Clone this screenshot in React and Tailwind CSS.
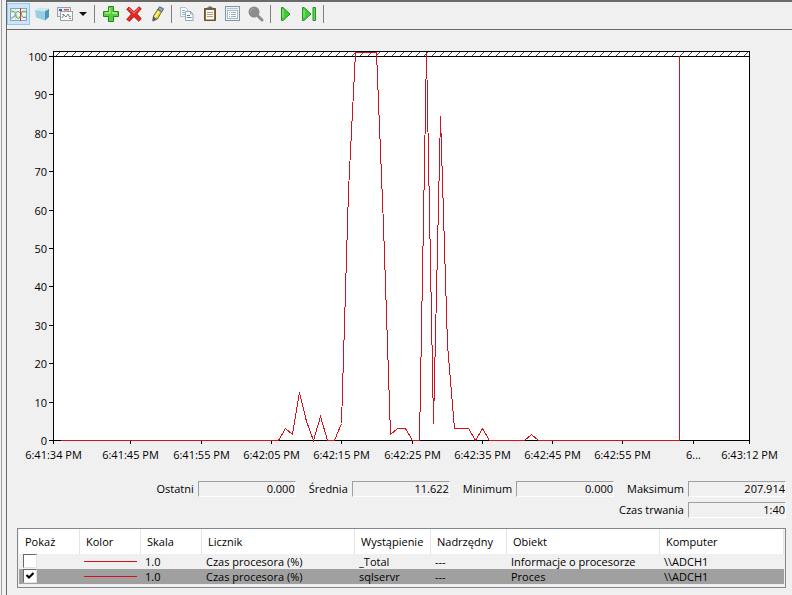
import React, { useState } from 'react';

const PLOT = { left: 46, right: 742, top: 21, full: 26, bottom: 410 };
const SAMPLES = 99;

const xAt = (i) => Math.round(PLOT.left + (i * (PLOT.right - PLOT.left)) / SAMPLES) + 0.5;
const yAt = (v) => Math.round(PLOT.bottom - (v * (PLOT.bottom - PLOT.full)) / 100) + 0.5;

// sample index -> value, everything else is 0
const peaks = {
  33: 3, 34: 1.5, 35: 12.5, 36: 5, 38: 6.2, 41: 4.4, 42: 65,
  43: 101, 44: 101, 45: 101, 46: 101, 47: 56, 48: 1.5, 49: 3, 50: 3,
  53: 101, 54: 4.5, 55: 84.4, 56: 25, 57: 3, 58: 3, 59: 3, 61: 3, 68: 1.5,
};

const LAST_SAMPLE = 89;

const yTicks = [0, 10, 20, 30, 40, 50, 60, 70, 80, 90, 100];

const xTicks = [
  { at: 0, label: '6:41:34 PM' },
  { at: 11, label: '6:41:45 PM' },
  { at: 21, label: '6:41:55 PM' },
  { at: 31, label: '6:42:05 PM' },
  { at: 41, label: '6:42:15 PM' },
  { at: 51, label: '6:42:25 PM' },
  { at: 61, label: '6:42:35 PM' },
  { at: 71, label: '6:42:45 PM' },
  { at: 81, label: '6:42:55 PM' },
  { at: 91, label: '6...' },
  { at: 99, label: '6:43:12 PM' },
];

const stats = [
  { id: 'last', label: 'Ostatni', value: '0.000' },
  { id: 'avg', label: 'Średnia', value: '11.622' },
  { id: 'min', label: 'Minimum', value: '0.000' },
  { id: 'max', label: 'Maksimum', value: '207.914' },
];

const counters = [
  { id: 'total', scale: '1.0', counter: 'Czas procesora (%)', instance: '_Total', parent: '---', object: 'Informacje o procesorze', computer: '\\\\ADCH1' },
  { id: 'sqlservr', scale: '1.0', counter: 'Czas procesora (%)', instance: 'sqlservr', parent: '---', object: 'Proces', computer: '\\\\ADCH1' },
];

const Icon = ({ children }) => (
  <svg width="16" height="16" viewBox="0 0 16 16" fill="none" className="shrink-0">
    {children}
  </svg>
);

const ActivityIcon = () => (
  <svg width="17" height="13" viewBox="0 0 17 13" fill="none" className="shrink-0">
    <rect x="0.5" y="0.5" width="16" height="12" fill="#eef5ee" stroke="#8ba4b8" />
    <path d="M1 4.5h15M1 8.5h15M5.5 1v11" stroke="#d0dee4" />
    <path d="M1 3l3 .5 2 2.5v3l2 1.500 2-1 2-6 3-.5 1 1.500" stroke="#4fae45" />
    <path d="M1 10.500l3-1.500 2-4.500 2-1.500 3 3 2 3.500h3" stroke="#6f98b5" />
    <path d="M10.5 0v13" stroke="#e0382c" />
  </svg>
);

const CubeIcon = () => (
  <Icon>
    <path d="M1 3.5L6 1.5l9 1-4 2.5z" fill="#c5e6f2" />
    <path d="M1 3.5L11 5v9.5L2 11.5z" fill="#98cfe3" />
    <path d="M11 5l4-2.5V11l-4 3.5z" fill="#4f93b6" />
    <path d="M1 3.5L11 5l4-2.5" stroke="#e5f5fa" strokeWidth="0.7" />
  </Icon>
);

const GalleryIcon = () => (
  <Icon>
    <rect x="0.5" y="1.5" width="13" height="9" fill="#e9eef5" stroke="#9a9fb0" />
    <path d="M2 3h3v2H2z" fill="#3c5c9c" />
    <path d="M7 3h5v1.5H7z" fill="#c0605a" />
    <rect x="3.5" y="5.5" width="12" height="9" fill="#fafcfd" stroke="#9a9fb0" />
    <path d="M5 12l2-3 2 2 2-3 1.5 3 1.5-1" stroke="#58a05a" />
    <path d="M5 8.5h2M12 12.5h2" stroke="#c87a78" />
  </Icon>
);

const AddIcon = () => (
  <Icon>
    <path d="M5.5 0.5h5v5h5v5h-5v5h-5v-5h-5v-5h5z" fill="#58cf3c" stroke="#20861b" strokeLinejoin="round" />
    <path d="M6.8 2v4.8H2M9 7h5" stroke="#b4f09c" strokeWidth="1.3" />
  </Icon>
);

const DeleteIcon = () => (
  <Icon>
    <path d="M3 1l5 4.6L13 .7l2.4 2L11 7.8l4.4 5-2.6 2.6L8 10.7l-4.6 4.7-2.8-2L5.2 8 .6 3.2z" fill="#df2927" stroke="#a81b1d" strokeWidth="0.7" />
    <path d="M3 2.5l5 4.7 4.8-4.7" stroke="#f58a80" />
  </Icon>
);

const HighlightIcon = () => (
  <Icon>
    <path d="M9 3l4 2-4.5 8L4 15l.5-5z" fill="#e8d63a" stroke="#6f6d2d" />
    <path d="M10.5 .8l4 2-1.7 3-4-2.2z" fill="#8fa6bb" stroke="#4d6277" />
    <path d="M9.5 5.5L6 11.5" stroke="#fbf7a5" strokeWidth="1.4" />
    <path d="M4 10.5l3.7 2-4.2 3z" fill="#4a5a6d" />
  </Icon>
);

const CopyIcon = () => (
  <Icon>
    <path d="M1.5 1.5h5l2 2v7h-7z" fill="#fff" stroke="#b3bfca" />
    <path d="M3 4.5h3M3 6.5h4M3 8.5h4" stroke="#8aa8ce" />
    <path d="M6.5 5.5h5L14 8v6.5H6.5z" fill="#fff" stroke="#96a6b6" />
    <path d="M11.5 5.5V8H14" stroke="#96a6b6" />
    <path d="M8 9.5h3M8 11.5h4.5" stroke="#557fb8" />
  </Icon>
);

const PasteIcon = () => (
  <Icon>
    <path d="M2.5 2.5h11v12h-11z" fill="#8a6a35" stroke="#6b5029" />
    <path d="M4 4h8v9.5H4z" fill="#faf8ec" />
    <path d="M5 6.5h6M5 8.5h6M5 10.5h6" stroke="#a5a399" />
    <path d="M5 1.5h1.5V0.5h3v1H11V4H5z" fill="#666055" />
  </Icon>
);

const PropertiesIcon = () => (
  <Icon>
    <rect x="0.5" y="0.5" width="14" height="14" fill="#edf1f4" stroke="#8496a6" />
    <path d="M2 2.5h11" stroke="#b4c3cf" />
    <rect x="2.5" y="4.5" width="10" height="8" fill="#fff" stroke="#a9b9c6" />
    <path d="M4 6.5h1M6 6.5h5M4 8.5h1M6 8.5h5M4 10.5h1M6 10.5h5" stroke="#9ab0c5" />
  </Icon>
);

const ZoomIcon = () => (
  <Icon>
    <circle cx="6" cy="6" r="5.5" fill="#8d8d8d" />
    <path d="M9.5 9.5l4.5 4.5" stroke="#8d8d8d" strokeWidth="3" strokeLinecap="round" />
    <path d="M2.5 5.5a4 4 0 0 1 3-3" stroke="#a9a9a9" />
  </Icon>
);

const PlayIcon = () => (
  <Icon>
    <path d="M3.5 1.5H5L12 8l-7 6.5H3.5z" fill="#45c93b" stroke="#239421" strokeLinejoin="round" />
    <path d="M5 3.5v8" stroke="#9df08d" />
  </Icon>
);

const StepIcon = () => (
  <Icon>
    <path d="M1.5 1.5H3L10 8l-7 6.5H1.5z" fill="#45c93b" stroke="#239421" strokeLinejoin="round" />
    <path d="M3 3.5v8" stroke="#9df08d" />
    <path d="M12 1.5h2.5v13H12z" fill="#62d455" stroke="#239421" />
  </Icon>
);

const ToolButton = ({ label, active, children }) => (
  <button
    type="button"
    aria-label={label}
    className={
      active
        ? 'flex h-[22px] w-[23px] items-center justify-center border border-[#90c8f6] bg-[#cce4f7]'
        : 'flex h-[22px] w-[23px] items-center justify-center'
    }
  >
    {children}
  </button>
);

const Separator = () => <div className="h-[18px] w-px bg-[#808080]" />;

const Toolbar = () => (
  <div className="flex h-[30px] items-start border-t-2 border-b border-t-[#6a6a6a] border-b-[#696969]">
    <div className="flex items-center pt-px">
      <ToolButton label="Wykres" active><ActivityIcon /></ToolButton>
      <ToolButton label="Dane bieżące"><CubeIcon /></ToolButton>
      <ToolButton label="Typ wykresu"><GalleryIcon /></ToolButton>
      <button type="button" aria-label="Lista typów" className="flex h-[22px] w-3.5 items-center justify-center">
        <svg width="8" height="4" viewBox="0 0 8 4"><path d="M0 0h8L4 4z" fill="#111" /></svg>
      </button>
      <div className="px-1"><Separator /></div>
      <ToolButton label="Dodaj"><AddIcon /></ToolButton>
      <ToolButton label="Usuń"><DeleteIcon /></ToolButton>
      <ToolButton label="Wyróżnij"><HighlightIcon /></ToolButton>
      <div className="px-[3px]"><Separator /></div>
      <ToolButton label="Kopiuj"><CopyIcon /></ToolButton>
      <ToolButton label="Wklej"><PasteIcon /></ToolButton>
      <ToolButton label="Właściwości"><PropertiesIcon /></ToolButton>
      <ToolButton label="Powiększ"><ZoomIcon /></ToolButton>
      <div className="px-[3px]"><Separator /></div>
      <ToolButton label="Odblokuj"><PlayIcon /></ToolButton>
      <ToolButton label="Aktualizuj"><StepIcon /></ToolButton>
      <div className="px-[3px]"><Separator /></div>
    </div>
  </div>
);

const Chart = () => {
  const points = [];
  for (let i = 1; i <= LAST_SAMPLE; i++) {
    points.push(`${xAt(i)},${yAt(peaks[i] || 0)}`);
  }

  return (
    <svg viewBox="0 0 785 440" className="block w-full">
      <defs>
        <pattern id="hatch" width="8" height="4" patternUnits="userSpaceOnUse" x="0" y="22">
          <path d="M1 4L5 0" stroke="#333" strokeWidth="0.9" />
        </pattern>
      </defs>
      <rect x="46" y="21" width="697" height="390" fill="#fff" />
      <rect x="47" y="22" width="695" height="4" fill="url(#hatch)" />
      <g shapeRendering="crispEdges" fill="none" stroke="#000">
        <rect x="46.5" y="21.5" width="696" height="389" />
        <path d="M46 26.5h697" />
        {yTicks.map((v) => (
          <path key={v} d={`M42 ${yAt(v)}h4`} />
        ))}
        {xTicks.map((t) => (
          <path key={t.at} d={`M${xAt(t.at)} 411v3`} />
        ))}
        <polyline points={points.join(' ')} stroke="#d4101c" />
        <path d={`M${xAt(LAST_SAMPLE)} 26v385`} stroke="#d4101c" />
      </g>
      <g fontSize="11" fill="#000">
        {yTicks.map((v) => (
          <text key={v} x="40" y={yAt(v) + 4} textAnchor="end">{v}</text>
        ))}
        {xTicks.map((t) => (
          <text key={t.at} x={xAt(t.at)} y="429" textAnchor="middle">{t.label}</text>
        ))}
      </g>
    </svg>
  );
};

const Stat = ({ id, label, value }) => (
  <div className="flex items-center gap-1">
    <label htmlFor={id}>{label}</label>
    <input
      id={id}
      readOnly
      value={value}
      className="h-4 w-[98px] border border-t-[#a0a0a0] border-r-white border-b-white border-l-[#a0a0a0] bg-[#f0f0f0] text-right leading-4 outline-none"
    />
  </div>
);

const CounterTable = () => {
  const [shown, setShown] = useState({ total: false, sqlservr: true });
  const head = 'border-r border-[#e5e5e5] pl-1.5 text-left font-normal';

  return (
    <div className="border border-[#828790] bg-[#f0f0f0] px-px pb-[3px]">
      <table className="w-full table-fixed border-separate border-spacing-0 whitespace-nowrap">
        <colgroup>
          <col className="w-[61px]" />
          <col className="w-[61px]" />
          <col className="w-[61px]" />
          <col className="w-[153px]" />
          <col className="w-[76px]" />
          <col className="w-[76px]" />
          <col className="w-[153px]" />
          <col />
        </colgroup>
        <thead>
          <tr className="h-[25px] bg-white">
            <th className={head}>Pokaż</th>
            <th className={head}>Kolor</th>
            <th className={head}>Skala</th>
            <th className={head}>Licznik</th>
            <th className={head}>Wystąpienie</th>
            <th className={head}>Nadrzędny</th>
            <th className={head}>Obiekt</th>
            <th className={head}>Komputer</th>
          </tr>
        </thead>
        <tbody>
          {counters.map((c) => (
            <tr key={c.id} className={c.id === 'sqlservr' ? 'h-[15px] bg-[#a0a0a0]' : 'h-[15px]'}>
              <td className="pl-1">
                <label className="relative block h-[15px] w-3.5">
                  <input
                    type="checkbox"
                    aria-label={c.instance}
                    checked={shown[c.id]}
                    onChange={() => setShown({ ...shown, [c.id]: !shown[c.id] })}
                    className="block h-[14px] w-[14px] appearance-none border border-t-[#696969] border-r-[#e3e3e3] border-b-[#e3e3e3] border-l-[#696969] bg-white"
                  />
                  {shown[c.id] && (
                    <svg viewBox="0 0 14 14" className="pointer-events-none absolute top-0 left-0 h-[14px] w-[14px]">
                      <path d="M3.5 6L6 8.5 10.5 4" stroke="#000" strokeWidth="2.2" fill="none" />
                    </svg>
                  )}
                </label>
              </td>
              <td className="pr-1 pl-1"><div className="h-px bg-[#d4101c]" /></td>
              <td className="pl-1 leading-[15px]">{c.scale}</td>
              <td className="pl-1 leading-[15px]">{c.counter}</td>
              <td className="pl-1 leading-[15px]">{c.instance}</td>
              <td className="pl-1 leading-[15px]">{c.parent}</td>
              <td className="pl-1 leading-[15px]">{c.object}</td>
              <td className="pl-1 leading-[15px]">{c.computer}</td>
            </tr>
          ))}
        </tbody>
      </table>
    </div>
  );
};

const App = () => {
  return (
    <div className="flex min-h-screen bg-[#f0f0f0] font-['Open_Sans','Noto_Sans',sans-serif] text-[11px] leading-4 text-black">
      <div className="flex w-[7px] shrink-0 justify-between pl-px">
        <div className="w-px bg-[#a0a0a0]" />
        <div className="w-px bg-[#696969]" />
      </div>
      <main className="min-w-0 flex-1">
        <Toolbar />
        <Chart />
        <div className="flex flex-col items-end gap-[5px] pt-[11px] pr-1.5">
          <div className="flex gap-[13px]">
            {stats.map((s) => (
              <Stat key={s.id} {...s} />
            ))}
          </div>
          <Stat id="duration" label="Czas trwania" value="1:40" />
        </div>
        <div className="pt-2.5 pr-1.5 pl-2.5">
          <CounterTable />
        </div>
      </main>
    </div>
  );
};

export default App;
